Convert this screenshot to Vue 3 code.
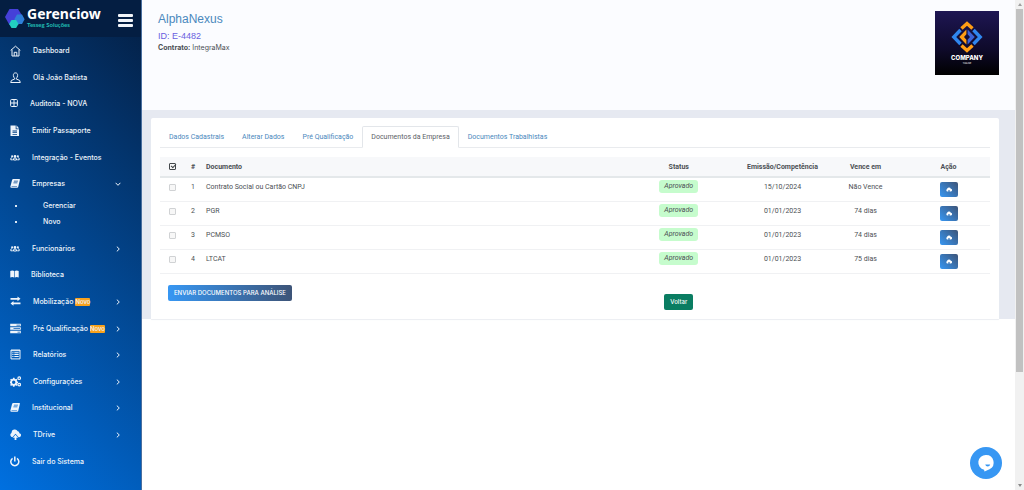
<script setup>
import { ref } from 'vue'

const icons = {
  home: { w: 11, s: 'M.7 5.4 5.5 1.2l4.8 4.2M2 4.6v6.4h7V4.6M4.2 11V7.3h2.6V11' },
  user: { w: 11, s: 'M5.5.9c1.6 0 2.3 1.2 2.1 2.7-.1 1.3-.8 2.2-1.2 2.6v.9l3.2 1.3.7 2.1H.7l.7-2.1 3.2-1.3v-.9C4.2 5.8 3.5 4.9 3.4 3.6 3.2 2.1 3.9.9 5.5.9z' },
  plus: { w: 8, s: 'M1.600 1.500h4.800q1 0 1 1v5q0 1-1 1H1.600q-1 0-1-1v-5q0-1 1-1zM4 2v6M1 5h6' },
  file: { w: 10, f: 'M.5.5h5.200v3.700H9V11H.5zM6.500.3 9.200 3.500H6.500zM2.500 5.500v.9H7v-.9zM2.500 7.200v.9H7v-.9zM2.500 8.900v.9H7v-.9z' },
  users: { w: 10, s: 'M3.500 8V6.800q0-.8 1.500-.8t1.500.8V8zM2.800 7.800H.8V6.500q0-.8 1.500-.8M7.200 7.800h2V6.500q0-.8-1.500-.8', f: 'M5 3a1.400 1.400 0 1 1 0 2.800A1.400 1.400 0 0 1 5 3zM2.100 3.300a1 1 0 1 1 0 2 1 1 0 0 1 0-2zM7.900 3.300a1 1 0 1 1 0 2 1 1 0 0 1 0-2z' },
  book: { w: 10, f: 'M3.300 1h6q.8 0 .6.800L8.200 9q-.2.800-1 .8H1.400q-1.300 0-1-1.200L2 2.200Q2.300 1 3.300 1zM4 2.800l-.2.700h4l.2-.7zM3.500 4.500l-.2.700h4l.2-.7zM1.600 8.200l-.1.600h5.400l.2-.6z' },
  openBook: { w: 9, f: 'M.3 2q2.200-.9 3.900.1v6.400q-1.700-.9-3.900-.1zM8.700 2q-2.200-.9-3.900.1v6.400q1.700-.9 3.900-.1z' },
  exchange: { w: 11, f: 'M.5 2h7V.4l3 2.400-3 2.400V3.700h-7zM10.500 6.500h-7V5L.5 7.400l3 2.400V8.200h7z' },
  server: { w: 11, f: 'M.2.700h10.600v2.600H.2zM.2 4.200h10.600v2.600H.2zM.2 7.700h10.600v2.600H.2zM6.500 1.700v.7H10v-.7zM3.500 5.200v.7H10v-.7zM7.500 8.700v.7H10v-.7z' },
  list: { w: 11, s: 'M1 1h9v8.900H1zM1 1.700h9', f: 'M2.300 3.200h1.200v1H2.300zM4.300 3.200h4.400v1H4.300zM2.300 5.100h1.200v1H2.300zM4.300 5.100h4.400v1H4.300zM2.300 7h1.200v1H2.300zM4.300 7h4.400v1H4.300z' },
  cogs: { w: 11, f: 'M3 1.800h1.500l.2 1 .8.400.9-.5 1 1-.6.9.3.8 1 .2v1.400l-1 .2-.3.800.6.900-1 1-.9-.6-.8.400-.2 1H3l-.2-1-.8-.4-.9.600-1-1 .6-.9-.3-.8-.4-.2V5.600l.4-.2.300-.8-.6-.9 1-1 .9.500.8-.4zM3.700 4.600a1.700 1.700 0 1 0 0 3.400 1.700 1.700 0 0 0 0-3.400zM9.200.3a1.900 1.900 0 1 1 0 3.800 1.900 1.900 0 0 1 0-3.800zm0 1.200a.7.7 0 1 0 0 1.400.7.7 0 0 0 0-1.400zM9.200 6.700a1.900 1.900 0 1 1 0 3.800 1.900 1.900 0 0 1 0-3.800zm0 1.200a.7.7 0 1 0 0 1.400.7.7 0 0 0 0-1.400z' },
  cloud: { w: 11, f: 'M2.600 8.200A2.300 2.300 0 0 1 1.500 3.900 3.300 3.300 0 0 1 7.700 2.200 2 2 0 0 1 9.400 4.200a1.900 1.900 0 0 1-.8 4L5.500 4.700 2.400 8.200zM5.500 5.800l2.700 2.900H6.400V11H4.600V8.700H2.800z' },
  power: { w: 10, s: 'M2.600 2.300a4 4 0 1 0 4.400 0M4.800.6v4.800', t: 1.5 }
}

const menu = [
  { label: 'Dashboard', icon: 'home' },
  { label: 'Olá João Batista', icon: 'user' },
  { label: 'Auditoria - NOVA', icon: 'plus' },
  { label: 'Emitir Passaporte', icon: 'file' },
  { label: 'Integração - Eventos', icon: 'users' },
  { label: 'Empresas', icon: 'book', group: true, children: ['Gerenciar', 'Novo'] },
  { label: 'Funcionários', icon: 'users', group: true },
  { label: 'Biblioteca', icon: 'openBook' },
  { label: 'Mobilização', icon: 'exchange', group: true, badge: 'Novo' },
  { label: 'Pré Qualificação', icon: 'server', group: true, badge: 'Novo' },
  { label: 'Relatórios', icon: 'list', group: true },
  { label: 'Configurações', icon: 'cogs', group: true },
  { label: 'Institucional', icon: 'book', group: true },
  { label: 'TDrive', icon: 'cloud', group: true },
  { label: 'Sair do Sistema', icon: 'power' }
]

const tabs = ['Dados Cadastrais', 'Alterar Dados', 'Pré Qualificação', 'Documentos da Empresa', 'Documentos Trabalhistas']
const activeTab = ref(3)

const rows = ref([
  { name: 'Contrato Social ou Cartão CNPJ', status: 'Aprovado', date: '15/10/2024', due: 'Não Vence', picked: false },
  { name: 'PGR', status: 'Aprovado', date: '01/01/2023', due: '74 dias', picked: false },
  { name: 'PCMSO', status: 'Aprovado', date: '01/01/2023', due: '74 dias', picked: false },
  { name: 'LTCAT', status: 'Aprovado', date: '01/01/2023', due: '75 dias', picked: false }
])
</script>

<template>
  <div class="app">
    <aside class="sidebar">
      <div class="brand">
        <svg class="brand-mark" viewBox="0 0 20 20" aria-hidden="true">
          <path d="M4.500 0h8.500l5 8-5 8H4.500L0 8z" fill="#4540d8" />
          <path d="M12 5.500h5l2.600 4.700-2.600 4.800h-5L9.400 10.200z" fill="#2f80d8" />
          <path d="M6.500 11h4.600l2.400 4-2.400 4H6.500l-2.400-4z" fill="#22cfc0" />
        </svg>
        <div class="brand-text">
          <span class="brand-name">Gerenciow</span>
          <span class="brand-sub">Tesseg Soluções</span>
        </div>
        <button class="burger" type="button" aria-label="Menu"><i></i><i></i><i></i></button>
      </div>
      <nav class="nav">
        <ul class="menu">
          <li v-for="item in menu" :key="item.label" :class="{ open: item.children }">
            <component :is="item.group ? 'button' : 'a'" class="item" :href="item.group ? null : '#'" :type="item.group ? 'button' : null">
              <svg class="icon" :width="icons[item.icon].w" height="12" :viewBox="`0 0 ${icons[item.icon].w} 12`" aria-hidden="true">
                <path v-if="icons[item.icon].s" :d="icons[item.icon].s" fill="none" stroke="currentColor" :stroke-width="icons[item.icon].t || 1" />
                <path v-if="icons[item.icon].f" :d="icons[item.icon].f" fill="currentColor" fill-rule="evenodd" />
              </svg>
              <span class="label">{{ item.label }}</span>
              <span v-if="item.badge" class="badge">{{ item.badge }}</span>
              <svg v-if="item.group" class="chevron" :class="{ down: item.children }" viewBox="0 0 6 6" aria-hidden="true">
                <path d="M1.800.600 4.300 3 1.800 5.400" fill="none" stroke="currentColor" />
              </svg>
            </component>
            <ul v-if="item.children" class="submenu">
              <li v-for="child in item.children" :key="child"><a href="#">{{ child }}</a></li>
            </ul>
          </li>
        </ul>
      </nav>
    </aside>

    <main class="main">
      <header class="head">
        <div>
          <h1>AlphaNexus</h1>
          <p class="ident">ID: E-4482</p>
          <p class="contract"><b>Contrato:</b> IntegraMax</p>
        </div>
        <div class="company">
          <svg viewBox="0 0 32 32" aria-hidden="true">
            <g fill="none" stroke-width="3.400">
              <path d="M10.500 7.500 16 2.500l5.500 5M10.500 24.500l5.500 5 5.500-5" stroke="#ff9d14" />
              <path d="M9.500 9 2.800 16l6.700 7M22.500 9l6.700 7-6.700 7" stroke="#2f86ef" />
            </g>
            <path d="M15.400 8.500v4.700L13 16l2.400 2.800v4.700L8.200 16z" fill="#ff9d14" />
            <path d="M16.600 8.500v4.700L19 16l-2.400 2.800v4.700L23.800 16z" fill="#3b62d8" />
          </svg>
          <strong>COMPANY</strong>
          <small>TAGLINE</small>
        </div>
      </header>

      <section class="band">
        <div class="card">
          <div class="tabs" role="tablist">
            <button v-for="(tab, i) in tabs" :key="tab" type="button" role="tab" :aria-selected="i === activeTab" :class="{ active: i === activeTab }" @click="activeTab = i">{{ tab }}</button>
          </div>
          <table>
            <thead>
              <tr>
                <th class="c-check"><input type="checkbox" class="all" checked aria-label="Selecionar todos" /></th>
                <th class="c-num">#</th>
                <th class="c-doc">Documento</th>
                <th class="c-status">Status</th>
                <th class="c-col">Emissão/Competência</th>
                <th class="c-col">Vence em</th>
                <th class="c-col">Ação</th>
              </tr>
            </thead>
            <tbody>
              <tr v-for="(row, i) in rows" :key="row.name">
                <td><input v-model="row.picked" type="checkbox" :aria-label="row.name" /></td>
                <td>{{ i + 1 }}</td>
                <td class="c-doc">{{ row.name }}</td>
                <td class="status"><em class="pill">{{ row.status }}</em></td>
                <td>{{ row.date }}</td>
                <td>{{ row.due }}</td>
                <td>
                  <button type="button" class="download" :aria-label="`Baixar ${row.name}`">
                    <svg viewBox="0 0 6 5" aria-hidden="true">
                      <path d="M1.400 4.500A1.300 1.300 0 0 1 1 2.100 2 2 0 0 1 4.800 1.700a1.400 1.400 0 0 1-.2 2.800H3.600V3H2.400v1.500z" fill="#fff" />
                    </svg>
                  </button>
                </td>
              </tr>
            </tbody>
          </table>
          <div class="actions">
            <button type="button" class="send">ENVIAR DOCUMENTOS PARA ANÁLISE</button>
            <div class="back-area"><button type="button" class="back">Voltar</button></div>
          </div>
        </div>
      </section>
    </main>

    <div class="rail" aria-hidden="true">
      <span class="arrow up"></span>
      <span class="thumb"></span>
      <span class="arrow"></span>
    </div>

    <button type="button" class="chat" aria-label="Abrir chat">
      <svg viewBox="0 0 18 18" aria-hidden="true">
        <path d="M9 1a7.500 7.500 0 0 1 3.500 14.200L7.500 17.500l-.4-1.700A7.500 7.500 0 0 1 9 1z" fill="#fff" />
        <path d="M8.200 10.500h5q-.5 2-2.500 2t-2.500-2z" fill="#3797f3" />
      </svg>
    </button>
  </div>
</template>

<style>
body {
  background: #fff;
  overflow: hidden;
}
</style>

<style scoped>
.app {
  display: grid;
  grid-template-columns: 142px 1fr 9px;
  height: 100vh;
  font-family: Inter, "Liberation Sans", sans-serif;
  font-size: 7px;
  line-height: 10px;
  color: #4b4f54;
}

* {
  box-sizing: border-box;
}

ul, h1, p {
  margin: 0;
  padding: 0;
  list-style: none;
}

button {
  margin: 0;
  padding: 0;
  border: 0;
  background: none;
  font: inherit;
  color: inherit;
  cursor: pointer;
}

a {
  color: inherit;
  text-decoration: none;
}

.sidebar {
  display: flex;
  flex-direction: column;
  border-right: 1px solid #4a6f9f;
  background: linear-gradient(45deg, #0070e0, #041e42);
  color: #eef4fb;
}

.brand {
  display: flex;
  align-items: center;
  flex: none;
  height: 37px;
  padding: 0 8px 0 5px;
  background: #041e42;
}

.brand-mark {
  width: 20px;
  height: 20px;
  margin-right: 2px;
}

.brand-text {
  display: flex;
  flex: 1;
  flex-direction: column;
  padding-bottom: 2px;
}

.brand-name {
  font: 700 14px/14px "Noto Sans", sans-serif;
  color: #fff;
}

.brand-sub {
  font: 700 6px/7px Lato, sans-serif;
  color: #20bfb4;
}

.burger {
  display: grid;
  gap: 2px;
  width: 15px;
  margin-top: 3px;
}

.burger i {
  height: 3px;
  border-radius: 1px;
  background: #f2f5f9;
}

.nav {
  flex: 1;
  min-height: 0;
  padding: 1px 0 15px;
}

.menu {
  display: flex;
  flex-direction: column;
  height: 100%;
}

.menu > li {
  display: flex;
  flex-direction: column;
  flex: 1 1 0;
}

.menu > .open {
  flex-basis: 38px;
}

.item {
  display: flex;
  align-items: center;
  flex: 1;
  width: 100%;
  padding: 0 20px 0 10px;
  font-weight: 500;
  text-align: left;
}

.icon {
  flex: none;
  margin-right: 12px;
}

.badge {
  margin-left: 2px;
  border-radius: 1px;
  background: #faa21c;
  font-size: 6px;
  line-height: 8px;
}

.chevron {
  width: 6px;
  height: 6px;
  margin-left: auto;
}

.down {
  transform: rotate(90deg);
}

.submenu {
  height: 38px;
  font-weight: 500;
}

.submenu li {
  display: flex;
  align-items: center;
  height: 16px;
  padding-left: 15px;
}

.submenu li::before {
  content: "";
  width: 2px;
  height: 2px;
  margin-right: 26px;
  background: #dce8f5;
}

.main {
  min-width: 0;
}

.head {
  display: flex;
  justify-content: space-between;
  height: 110px;
  padding: 11px 16px 0;
  background: #fbfcff;
}

h1 {
  font: 400 12px/16px "Liberation Sans", sans-serif;
  color: #4a88bd;
}

.ident {
  margin-top: 3px;
  font: 400 9px/12px "Liberation Sans", sans-serif;
  color: #6a5fe0;
}

.contract {
  line-height: 12px;
}

.company {
  display: flex;
  flex-direction: column;
  align-items: center;
  width: 64px;
  height: 64px;
  padding-top: 10px;
  background: linear-gradient(#1e1653, #0e0a2a 60%, #000);
  color: #fff;
}

.company svg {
  width: 32px;
  height: 32px;
}

.company strong {
  font: 800 6px/9px Inter, sans-serif;
}

.company small {
  font-size: 2px;
  line-height: 3px;
}

.band {
  padding: 8px 16px 0 9px;
  background: #e6e9f1;
}

.card {
  padding: 8px 9px 9px;
  border-radius: 2px 2px 0 0;
  background: #fff;
  box-shadow: 0 1px 1px #eceef2;
  font-family: Roboto, sans-serif;
}

.tabs {
  display: flex;
  border-bottom: 1px solid #e9ebee;
}

.tabs button {
  height: 22px;
  margin-bottom: -1px;
  padding: 0 8px;
  border: 1px solid transparent;
  border-radius: 2px 2px 0 0;
  color: #4a88bd;
}

.tabs .active {
  border-color: #e3e6ea #e3e6ea #fff;
  color: #5c6166;
}

table {
  width: 100%;
  margin-top: 9px;
  border-collapse: separate;
  border-spacing: 0;
  table-layout: fixed;
  text-align: center;
}

th {
  height: 21px;
  padding: 0;
  border-bottom: 2px solid #e4e8ea;
  background: #f7f8fa;
  font-weight: 700;
  vertical-align: middle;
}

td {
  height: 24px;
  padding: 4px 0 0;
  border-bottom: 1px solid #f0f1f3;
  vertical-align: top;
}

.status {
  padding-top: 2px;
}

.c-check {
  width: 25px;
}

.c-num {
  width: 16px;
}

.c-doc {
  padding-left: 5px;
  text-align: left;
}

.c-status {
  width: 15%;
}

.c-col {
  width: 10%;
}

input {
  appearance: none;
  display: block;
  width: 7px;
  height: 7px;
  margin: 2px auto 0;
  border: 1px solid #d0d2d4;
  border-radius: 1px;
  background: #f7f7f7;
}

.all {
  margin-top: 0;
  border-color: #43474b;
}

.all::after {
  content: "";
  display: block;
  width: 2px;
  height: 4px;
  margin: -1px 0 0 2px;
  border: solid #43474b;
  border-width: 0 1px 1px 0;
  transform: rotate(45deg);
}

.pill {
  display: inline-block;
  padding: 1px 5px 2px;
  border-radius: 3px;
  background: #c6fccd;
}

.download {
  display: inline-flex;
  align-items: center;
  justify-content: center;
  width: 18px;
  height: 15px;
  border-radius: 2px;
  background: linear-gradient(45deg, #3797f3, #3d5478);
}

.download svg {
  width: 6px;
  height: 5px;
}

.actions {
  display: flex;
  align-items: flex-start;
  justify-content: space-between;
  padding-top: 11px;
}

.send,
.back {
  height: 16px;
  border-radius: 2px;
  color: #fff;
  font: 500 6px/10px Inter, sans-serif;
}

.send {
  margin-left: 8px;
  padding: 0 6px;
  background: linear-gradient(90deg, #3797f3, #3d5478);
  white-space: nowrap;
}

.back-area {
  width: 75%;
  padding-top: 9px;
  text-align: center;
}

.back {
  padding: 0 6px;
  background: #0a7d62;
}

.rail {
  display: flex;
  flex-direction: column;
  align-items: center;
  justify-content: space-between;
  padding: 3px 0;
  background: #f1f1f1;
}

.thumb {
  width: 7px;
  height: 75%;
  margin: 3px 0 auto;
  background: #c1c1c1;
}

.arrow {
  border: solid transparent;
  border-width: 3px 2px 0;
  border-top-color: #8a8a8a;
}

.up {
  border-width: 0 2px 3px;
  border-bottom-color: #a0a0a0;
}

.chat {
  position: fixed;
  right: 22px;
  bottom: 11px;
  display: grid;
  place-items: center;
  width: 32px;
  height: 32px;
  border-radius: 50%;
  background: #3797f3;
}

.chat svg {
  width: 18px;
  height: 18px;
}
</style>
